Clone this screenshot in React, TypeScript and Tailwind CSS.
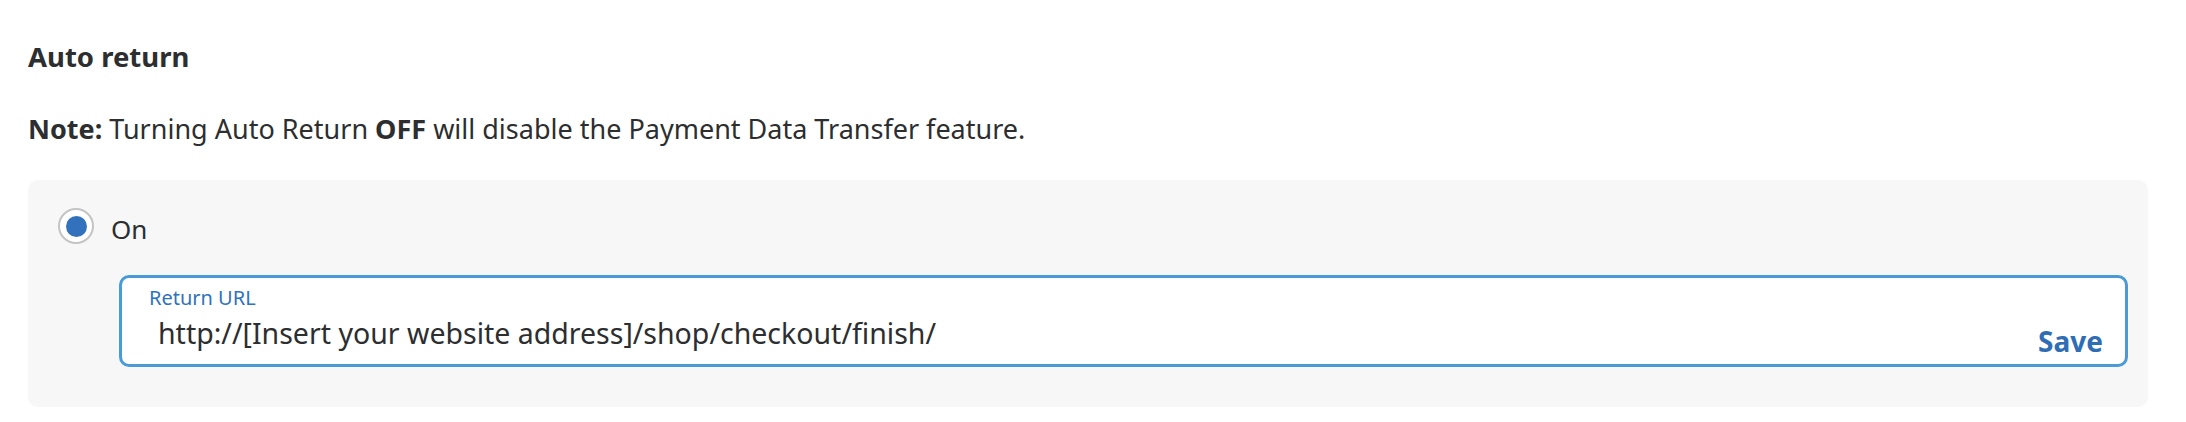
export default function App() {
  return (
    <div className="min-h-screen bg-white pb-[15px] pl-[28px] pr-[38px] pt-[43px] font-['Noto_Sans',sans-serif] text-[#2c2e2f]">
      {/* Section heading */}
      <h2 className="text-[27.5px] font-bold leading-[28px]">Auto return</h2>

      <p className="mt-[44px] text-[27px] leading-[28px]">
        <span className="font-bold">Note:</span> Turning Auto Return <span className="font-bold">OFF</span> will
        disable the Payment Data Transfer feature.
      </p>

      {/* Options panel */}
      <div className="mt-[37px] rounded-[10px] bg-[#f7f7f7] pb-[40px] pl-[30px] pr-[20px] pt-[28px]">
        <label className="flex items-center">
          <span className="flex h-[36px] w-[36px] items-center justify-center rounded-full border-2 border-[#c4c4c4] bg-white">
            <span className="h-[21px] w-[21px] rounded-full bg-[#3271bb]" />
          </span>
          <span className="ml-[17px] pt-[6px] text-[26px] leading-[28px]">On</span>
        </label>

        <div className="ml-[61px] mt-[31px] flex h-[92px] items-end justify-between rounded-[10px] border-[3px] border-[#4a9ad6] bg-white pb-[8px] pl-[27px] pr-[22px] pt-[10px]">
          <div className="flex flex-col">
            <span className="text-[20px] leading-[20px] text-[#2f72bd]">Return URL</span>
            <span className="mb-[8px] mt-[10px] pl-[9px] text-[28.5px] leading-[30px]">
              http://[Insert your website address]/shop/checkout/finish/
            </span>
          </div>
          <button className="text-[28px] font-bold leading-[30px] text-[#2f6db5]">Save</button>
        </div>
      </div>
    </div>
  );
}
